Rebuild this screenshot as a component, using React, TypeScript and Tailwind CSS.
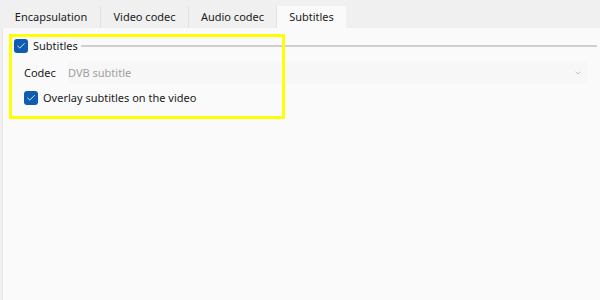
import { Check, ChevronDown } from "lucide-react";

const tabs = [
  { label: "Encapsulation", w: "w-[99px]" },
  { label: "Video codec", w: "w-[88px]" },
  { label: "Audio codec", w: "w-[88px]" },
  { label: "Subtitles", w: "w-[69px]" },
];

function Box() {
  return (
    <span className="grid h-[14px] w-[14px] shrink-0 place-items-center rounded-[3px] bg-[#0f5cb0]">
      <Check size={10} strokeWidth={2} className="text-white" />
    </span>
  );
}

export default function App() {
  return (
    <div
      className="relative flex h-[300px] w-[600px] flex-col overflow-hidden bg-[#f0f0f0] text-[11px] text-[#1b1b1b]"
      style={{ fontFamily: '"Noto Sans", "Segoe UI", sans-serif' }}
    >
      {/* tab strip */}
      <div className="flex h-[28px] items-end pl-[2px]">
        {tabs.map((t, i) => {
          const active = i === tabs.length - 1;
          return (
            <div
              key={t.label}
              className={
                active
                  ? `flex h-[22px] items-center justify-center bg-[#fafafa] ${t.w}`
                  : `flex h-[22px] items-center justify-center border-r border-[#e2e2e2] ${t.w}`
              }
            >
              {t.label}
            </div>
          );
        })}
      </div>

      {/* panel */}
      <div className="ml-[2px] flex flex-1 flex-col border-l border-[#e6e6e6] bg-[#fafafa] pl-[11px] pr-[3px] pt-[10px]">
        <div className="flex h-[16px] items-center">
          <Box />
          <span className="ml-[5px]">Subtitles</span>
          <div className="ml-[3px] h-[2px] flex-1 bg-[#cfcfcf]" />
        </div>

        <div className="mt-[8px] flex items-center pl-[10px] pr-[9px]">
          <span className="w-[44px]">Codec</span>
          <div className="flex h-[22px] flex-1 items-center justify-between rounded-[3px] bg-[#f7f7f7] pr-[6px]">
            <span className="text-[#a0a0a0]">DVB subtitle</span>
            <ChevronDown size={8} className="text-[#a8a8a8]" />
          </div>
        </div>

        <div className="mt-[6px] flex h-[16px] items-center pl-[10px]">
          <Box />
          <span className="ml-[5px]">Overlay subtitles on the video</span>
        </div>
      </div>

      {/* highlight overlay */}
      <div className="pointer-events-none absolute left-[9px] top-[34px] h-[85px] w-[276px] border-[3px] border-[#ffff00]" />
    </div>
  );
}
